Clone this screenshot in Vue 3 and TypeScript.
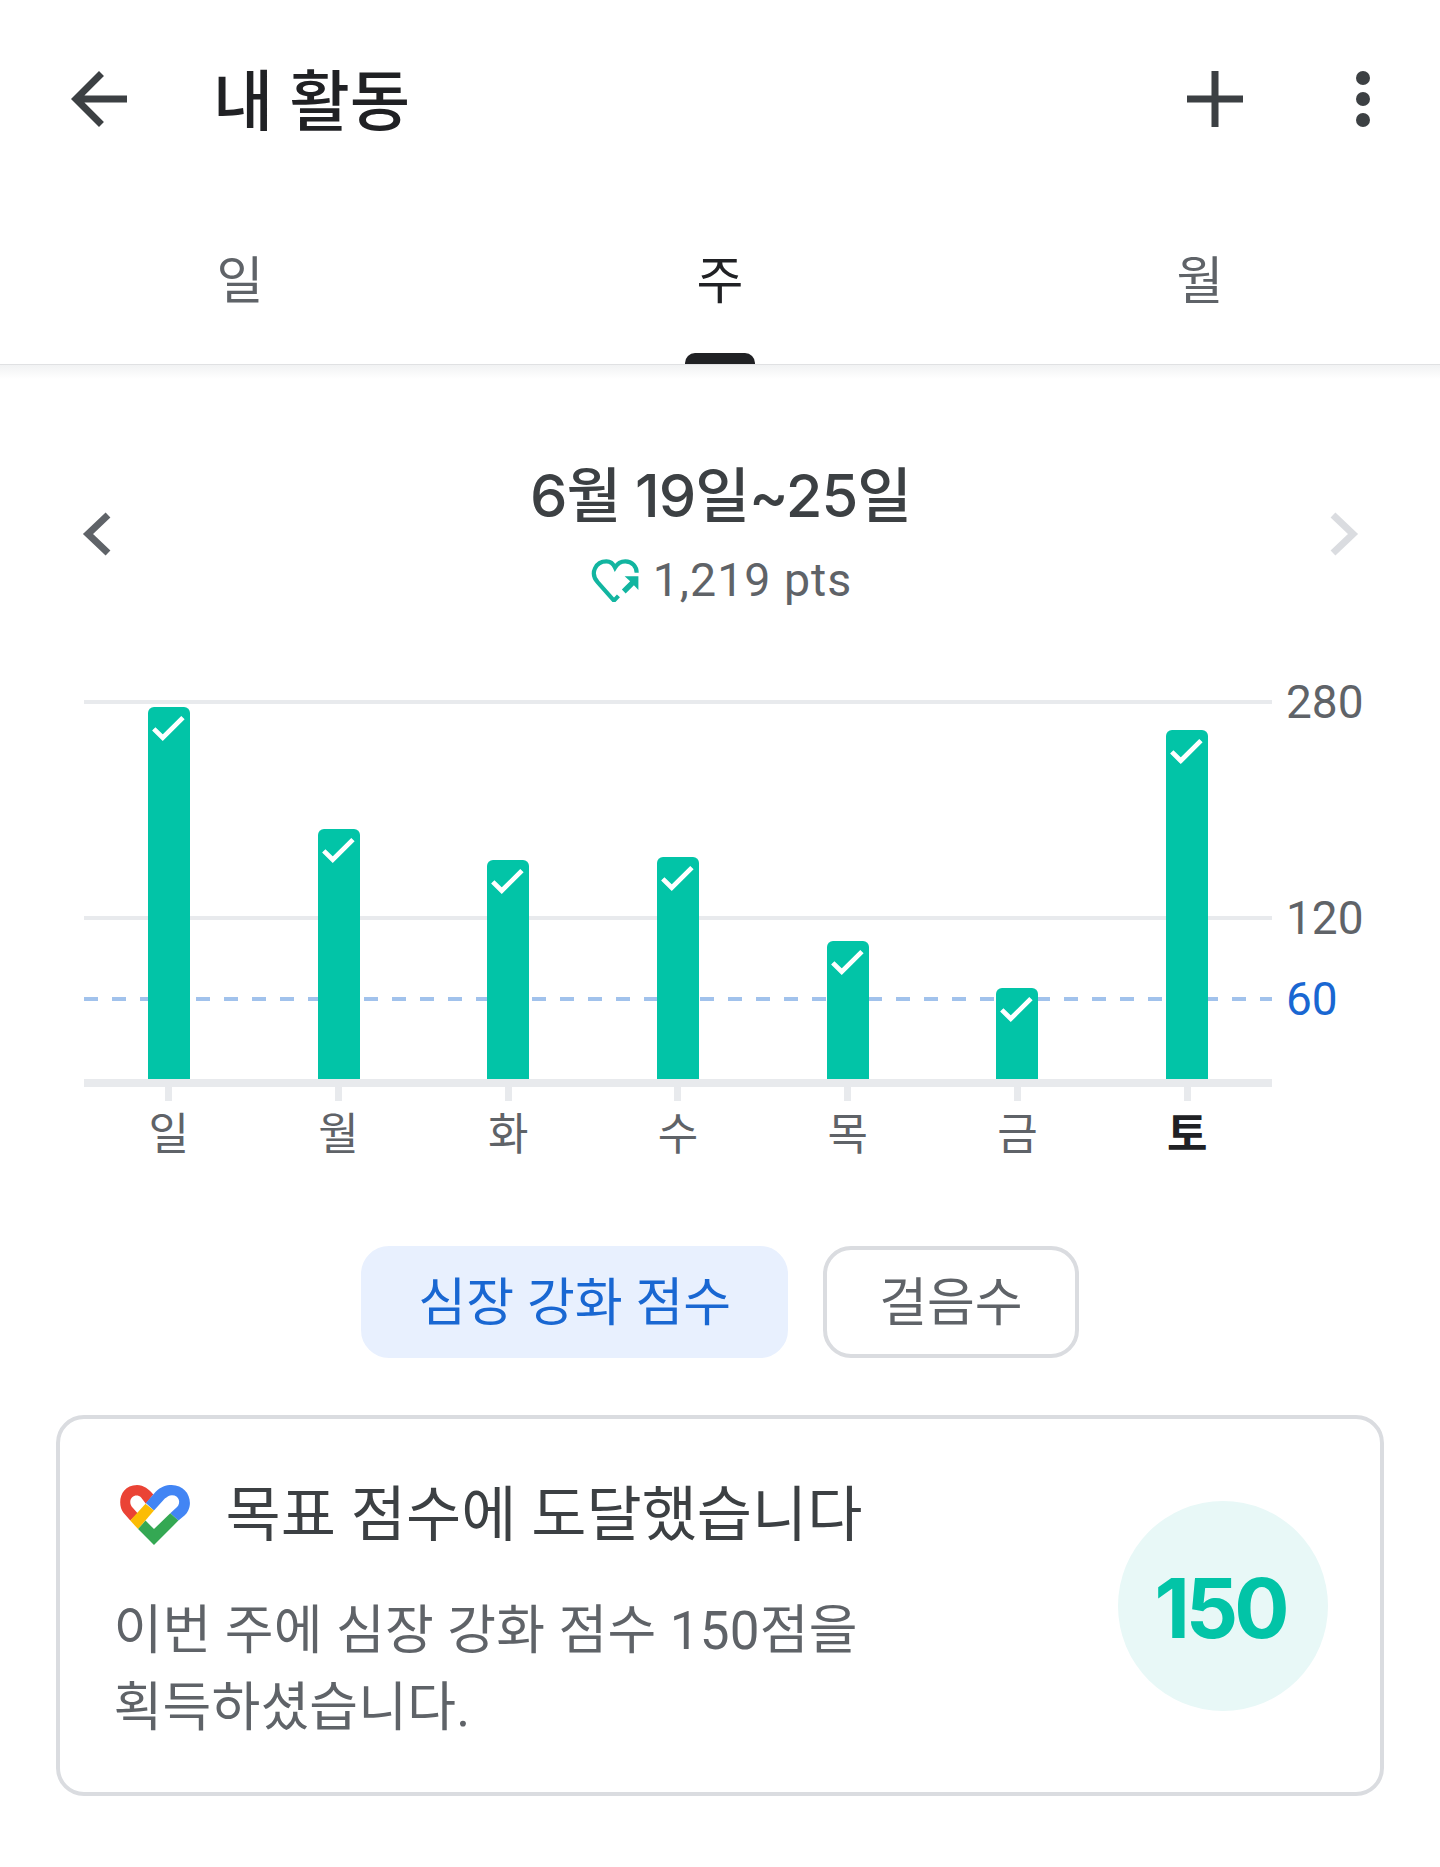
<template>
  <div class="page">
    <header class="topbar">
      <button class="icon-btn back" aria-label="back">
        <svg viewBox="0 0 24 24" width="84" height="84"><path d="M20 11H7.83l5.59-5.59L12 4l-8 8 8 8 1.41-1.41L7.83 13H20v-2z" /></svg>
      </button>
      <h1 class="title">내 활동</h1>
      <button class="icon-btn add" aria-label="add">
        <svg viewBox="0 0 24 24" width="84" height="84"><path d="M20 13h-7v7h-2v-7H4v-2h7V4h2v7h7v2z" /></svg>
      </button>
      <button class="icon-btn more" aria-label="more">
        <svg viewBox="0 0 24 24" width="84" height="84"><circle cx="12" cy="6" r="2" /><circle cx="12" cy="12" r="2" /><circle cx="12" cy="18" r="2" /></svg>
      </button>
    </header>

    <nav class="tabs">
      <div v-for="tab in tabs" :key="tab" class="tab" :class="{ active: tab === activeTab }">
        {{ tab }}
        <span v-if="tab === activeTab" class="tab-mark"></span>
      </div>
    </nav>
    <div class="tabs-shadow"></div>

    <section class="range">
      <svg class="chev" viewBox="0 0 30 44" width="30" height="44"><path d="M26 3 6 22l20 19" /></svg>
      <div class="range-info">
        <div class="range-title">6월 19일~25일</div>
        <div class="range-pts">
          <svg viewBox="71 50 138 125" width="48" height="43" class="pts-heart">
            <path class="heart-line" d="M150 157l-13 14-47-53C65 90 85 57 115 57c11 0 20 7 25 18 7-12 18-18 30-18 20 0 33 15 33 33" />
            <path class="heart-arrow" d="M168 100h40v40l-13-14-24 24-11-11 24-24z" />
          </svg>
          <span>1,219 pts</span>
        </div>
      </div>
      <svg class="chev off" viewBox="0 0 30 44" width="30" height="44"><path d="M4 3l20 19L4 41" /></svg>
    </section>

    <section class="chart">
      <div class="plot">
        <template v-for="line in lines" :key="line.value">
          <div class="grid-line" :class="{ goal: line.goal }" :style="{ top: plotHeight - line.value * scale - 1 + 'px' }"></div>
          <div class="axis-label" :class="{ goal: line.goal }" :style="{ top: plotHeight - line.value * scale + 1 + 'px' }">{{ line.value }}</div>
        </template>
        <div class="bars">
          <div v-for="day in days" :key="day.name" class="bar-slot">
            <div class="bar" :style="{ height: day.value * scale + 'px' }">
              <svg viewBox="0 0 24 24" width="42" height="42"><path d="M9 16.17 4.83 12l-1.42 1.41L9 19 21 7l-1.41-1.41z" /></svg>
            </div>
          </div>
        </div>
      </div>
      <div class="baseline"></div>
      <div class="days">
        <div v-for="day in days" :key="day.name" class="day" :class="{ today: day.today }">
          <span class="tick"></span>
          <span class="day-name">{{ day.name }}</span>
        </div>
      </div>
    </section>

    <div class="chips">
      <div class="chip selected">심장 강화 점수</div>
      <div class="chip">걸음수</div>
    </div>

    <section class="card">
      <div class="card-text">
        <div class="card-title">
          <svg class="fit-logo" viewBox="57 75 209 177" width="71" height="60">
            <path fill="#ea4335" d="M90 180 70 157C50 130 60 75 110 75c20 0 35 13 48 28l-22 27-14-18c-12-12-32-4-32 13 0 7 3 12 8 18l15 17z" />
            <path fill="#4285f4" d="m136 128 29-33c15-15 30-20 47-20 33 0 54 25 54 53 0 17-8 30-16 37l-18 15-24-22 20-18c12-12 7-35-15-35-8 0-15 5-21 10l-32 35z" />
            <path fill="#fbbc04" d="m90 180 45-50 25 20-47 55z" />
            <path fill="#34a853" d="m113 205 22-25 25 25 48-47 24 22-72 72z" />
          </svg>
          <span>목표 점수에 도달했습니다</span>
        </div>
        <p class="card-body">이번 주에 심장 강화 점수 150점을<br />획득하셨습니다.</p>
      </div>
      <div class="goal-circle">150</div>
    </section>
  </div>
</template>

<script setup lang="ts">
interface Day {
  name: string;
  value: number;
  today?: boolean;
}

const tabs = ["일", "주", "월"];
const activeTab = "주";

// pixels per heart point on the chart
const scale = 1.35;
const plotHeight = 378;

const lines = [
  { value: 280, goal: false },
  { value: 120, goal: false },
  { value: 60, goal: true },
];

const days: Day[] = [
  { name: "일", value: 275 },
  { name: "월", value: 185 },
  { name: "화", value: 162 },
  { name: "수", value: 164 },
  { name: "목", value: 102 },
  { name: "금", value: 67 },
  { name: "토", value: 258, today: true },
];
</script>

<style>
html,
body {
  margin: 0;
  background: #fff;
}
</style>

<style scoped>
.page {
  width: 1440px;
  height: 1867px;
  overflow: hidden;
  background: #fff;
  font-family: Roboto, "Noto Sans CJK KR", sans-serif;
  color: #3c4043;
}

.topbar {
  height: 198px;
  display: flex;
  align-items: center;
  padding: 0 35px 0 57px;
  box-sizing: border-box;
}

.icon-btn {
  width: 84px;
  height: 84px;
  padding: 0;
  border: none;
  background: none;
  flex: none;
}

.icon-btn svg {
  display: block;
  fill: #3c4043;
}

.add {
  margin-right: 64px;
}

.title {
  flex: 1;
  margin: 0 0 6px 72px;
  font-size: 65.5px;
  font-weight: 500;
  color: #202124;
}

.tabs {
  display: grid;
  grid-template-columns: repeat(3, 480px);
  height: 167px;
  border-bottom: 1px solid #e0e1e3;
  box-sizing: border-box;
}

.tab {
  position: relative;
  display: flex;
  justify-content: center;
  align-items: center;
  padding-bottom: 9px;
  font-size: 51px;
  color: #5f6368;
}

.tab.active {
  color: #202124;
}

.tab-mark {
  position: absolute;
  left: 205px;
  bottom: 0;
  width: 70px;
  height: 11px;
  border-radius: 10px 10px 0 0;
  background: #202124;
}

.tabs-shadow {
  height: 14px;
  background: linear-gradient(#f1f2f3, #fff);
}

.range {
  display: flex;
  justify-content: space-between;
  align-items: center;
  height: 175px;
  margin-top: 67px;
  padding: 0 81px 0 82px;
}

.chev {
  flex: none;
  fill: none;
  stroke: #5f6368;
  stroke-width: 7;
}

.chev.off {
  stroke: #dadce0;
}

.range-info {
  display: flex;
  flex-direction: column;
  align-items: center;
  gap: 27px;
}

.range-title {
  font-family: Inter, "Noto Sans CJK KR", sans-serif;
  font-size: 59.5px;
  line-height: 66px;
  font-weight: 500;
  letter-spacing: -1px;
  color: #3c4043;
}

.range-pts {
  display: flex;
  align-items: center;
  gap: 14px;
  padding-left: 2px;
  font-size: 46.5px;
  line-height: 50px;
  letter-spacing: 1px;
  color: #5f6368;
}

.pts-heart {
  flex: none;
}

.heart-line {
  fill: none;
  stroke: #12b5a0;
  stroke-width: 12;
}

.heart-arrow {
  fill: #12b5a0;
}

.chart {
  width: 1188px;
  margin: 79.5px 0 0 84px;
}

.plot {
  position: relative;
  height: 378px;
}

.grid-line {
  position: absolute;
  left: 0;
  right: 0;
  height: 4px;
  background: #e8eaed;
}

.grid-line.goal {
  background: repeating-linear-gradient(to right, #a1c2ec 0 14px, transparent 14px 28px);
}

.axis-label {
  position: absolute;
  left: calc(100% + 14px);
  transform: translateY(-50%);
  font-size: 46px;
  line-height: 50px;
  color: #5f6368;
}

.axis-label.goal {
  color: #1967d2;
}

.bars {
  position: relative;
  display: grid;
  grid-template-columns: repeat(7, 1fr);
  height: 100%;
}

.bar-slot {
  display: flex;
  justify-content: center;
  align-items: flex-end;
}

.bar {
  width: 42px;
  background: #02c4a7;
  border-radius: 6px 6px 0 0;
}

.bar svg {
  display: block;
  margin-left: -1px;
  fill: #fff;
  stroke: #fff;
  stroke-width: 0.7;
}

.baseline {
  height: 8px;
  background: #e8eaed;
}

.days {
  display: grid;
  grid-template-columns: repeat(7, 1fr);
}

.day {
  display: flex;
  flex-direction: column;
  align-items: center;
}

.tick {
  width: 7px;
  height: 14px;
  background: #e8eaed;
}

.day-name {
  margin-top: 11px;
  font-size: 44px;
  line-height: 46px;
  color: #5f6368;
}

.day.today .day-name {
  font-weight: 700;
  color: #202124;
}

.chips {
  display: flex;
  justify-content: center;
  gap: 35px;
  margin-top: 88.5px;
}

.chip {
  display: flex;
  align-items: center;
  height: 112px;
  padding: 0 52px 7px;
  box-sizing: border-box;
  border: 4px solid #dadce0;
  border-radius: 28px;
  font-size: 52px;
  color: #5f6368;
}

.chip.selected {
  padding: 0 53px 7px;
  border-color: #e8f0fe;
  background: #e8f0fe;
  color: #1967d2;
}

.card {
  display: flex;
  justify-content: space-between;
  align-items: center;
  width: 1328px;
  height: 381px;
  margin: 57px 0 0 56px;
  padding: 0 52px 0 53.5px;
  box-sizing: border-box;
  border: 4px solid #dadce0;
  border-radius: 28px;
}

.card-text {
  padding-top: 12px;
}

.card-title {
  display: flex;
  align-items: center;
  font-size: 60px;
  line-height: 77px;
  color: #3c4043;
}

.fit-logo {
  flex: none;
  margin: 0 36px 0 5px;
}

.card-body {
  margin: 39px 0 0;
  font-size: 53px;
  line-height: 77px;
  letter-spacing: 0.2px;
  color: #5f6368;
}

.goal-circle {
  display: flex;
  justify-content: center;
  align-items: center;
  flex: none;
  width: 210px;
  height: 210px;
  padding: 5px 6px 0 0;
  box-sizing: border-box;
  border-radius: 50%;
  background: #e8f8f7;
  font-family: Inter, sans-serif;
  font-size: 82px;
  font-weight: 700;
  letter-spacing: -4px;
  color: #02c4a7;
}
</style>
